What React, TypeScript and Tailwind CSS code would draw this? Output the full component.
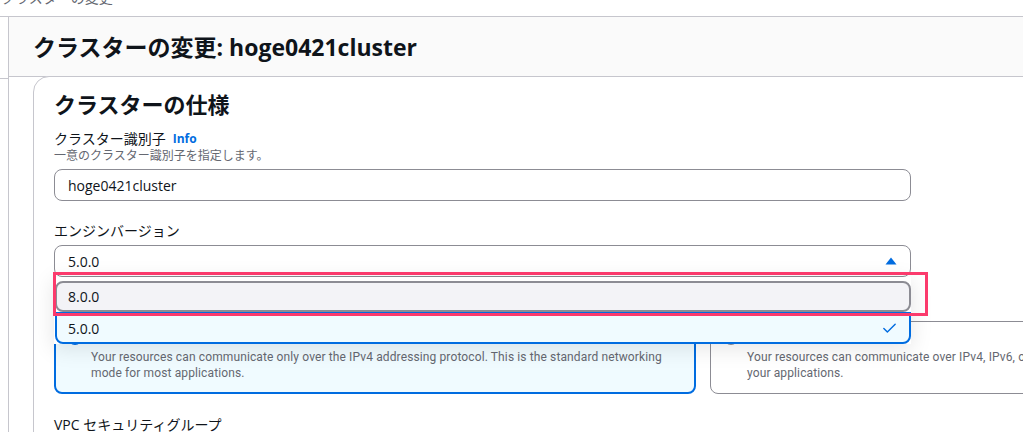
import { Check } from "lucide-react";

function Caret() {
  return (
    <svg width="16" height="16" viewBox="0 0 16 16" className="shrink-0">
      <path d="M2.5 11.5 L8 4.5 L13.5 11.5 Z" fill="#006ce0" />
    </svg>
  );
}

function Radio({ checked }: { checked: boolean }) {
  return checked ? (
    <span className="mt-[2px] flex h-[14px] w-[14px] shrink-0 items-center justify-center rounded-full bg-[#006ce0]">
      <span className="h-[6px] w-[6px] rounded-full bg-white" />
    </span>
  ) : (
    <span className="mt-[2px] h-[14px] w-[14px] shrink-0 rounded-full border-2 border-[#8c8c94] bg-white" />
  );
}

function VersionDropdown() {
  return (
    <div className="relative mt-[4px] w-[857px]">
      <div className="flex h-[32px] items-center justify-between rounded-[8px] border border-[#8c8c94] bg-white pl-[13px] pr-[11px] text-[14px]">
        <span>5.0.0</span>
        <Caret />
      </div>

      {/* open option list */}
      <div className="absolute left-0 top-[32px] z-10 w-[857px] bg-white pt-[4px] shadow-[0_4px_20px_1px_rgba(0,7,22,0.1)]">
        <div className="ml-px flex h-[31px] items-center rounded-[8px] border-2 border-[#8c8c94] bg-[#f3f3f7] pl-[11px] text-[14px]">
          8.0.0
        </div>
        <div className="ml-px flex h-[32px] items-center justify-between rounded-b-[8px] border-2 border-[#006ce0] bg-[#f0fbff] pl-[11px] pr-[11px] text-[14px]">
          <span>5.0.0</span>
          <Check size={17} strokeWidth={2} color="#006ce0" />
        </div>
      </div>

      {/* annotation box */}
      <div className="pointer-events-none absolute left-[-1px] top-[27px] z-20 h-[44px] w-[875px] border-[3px] border-[#fb3a6c]" />
    </div>
  );
}

export default function App() {
  return (
    <div className="h-[432px] w-[1023px] overflow-hidden bg-white font-['Open_Sans','Noto_Sans_CJK_JP',sans-serif] text-[#0f141a]">
      <div className="h-[17px] overflow-hidden border-b border-[#c6c6cd]">
        <div className="-mt-[12px] pl-[1px] text-[14px] leading-[20px] text-[#656871]">クラスターの変更</div>
      </div>

      <div className="flex">
        <div className="w-[9px] shrink-0 border-r border-[#c6c6cd]">
          <div className="h-[62px] border-b border-[#c6c6cd]" />
        </div>

        <main className="min-w-0 flex-1">
          <header className="flex h-[60px] items-center border-b border-[#c6c6cd] bg-[#fafafa] pl-[24px]">
            <h1 className="text-[23px] font-bold leading-[30px]">クラスターの変更: hoge0421cluster</h1>
          </header>

          <div className="pl-[24px]">
            <section className="-mt-px w-[1400px] rounded-tl-[16px] border border-[#c6c6cd] bg-white px-[20px] pt-[13px]">
              <h2 className="text-[22px] font-bold leading-[28px]">クラスターの仕様</h2>

              <div className="mt-[12px] flex items-center gap-[7px] text-[14px] leading-[18px]">
                <span>クラスター識別子</span>
                <span className="text-[12px] font-bold text-[#006ce0]">Info</span>
              </div>
              <p className="text-[12px] leading-[16px] text-[#656871]">一意のクラスター識別子を指定します。</p>
              <div className="mt-[5px] flex h-[32px] w-[857px] items-center rounded-[8px] border border-[#8c8c94] pl-[13px] text-[14px]">
                hoge0421cluster
              </div>

              <div className="mt-[20px] text-[14px] leading-[20px]">エンジンバージョン</div>
              <VersionDropdown />

              <div className="mt-[20px] text-[14px] leading-[20px]">ネットワークタイプ</div>
              <div className="mt-[4px] flex gap-[14px]">
                <div className="flex h-[73px] w-[642px] shrink-0 gap-[9px] rounded-[8px] border-2 border-[#006ce0] bg-[#f0fbff] pl-[12px] pt-[6px]">
                  <Radio checked />
                  <div>
                    <div className="text-[14px] leading-[16px]">IPv4</div>
                    <p className="mt-[4px] whitespace-nowrap font-['Roboto',sans-serif] text-[12px] leading-[16px] tracking-[0.12px] text-[#656871]">
                      Your resources can communicate only over the IPv4 addressing protocol. This is the standard networking
                      <br />
                      mode for most applications.
                    </p>
                  </div>
                </div>
                <div className="flex h-[73px] w-[642px] shrink-0 gap-[9px] rounded-[8px] border border-[#8c8c94] bg-white pl-[13px] pt-[7px]">
                  <Radio checked={false} />
                  <div>
                    <div className="text-[14px] leading-[16px]">デュアルスタックモード</div>
                    <p className="mt-[4px] whitespace-nowrap font-['Roboto',sans-serif] text-[12px] leading-[16px] tracking-[0.12px] text-[#656871]">
                      Your resources can communicate over IPv4, IPv6, or both. Dual-stack mode is used by some of
                      <br />
                      your applications.
                    </p>
                  </div>
                </div>
              </div>

              <div className="mt-[21px] text-[14px] leading-[20px]">VPC セキュリティグループ</div>
              <div className="h-[40px]" />
            </section>
          </div>
        </main>
      </div>
    </div>
  );
}
